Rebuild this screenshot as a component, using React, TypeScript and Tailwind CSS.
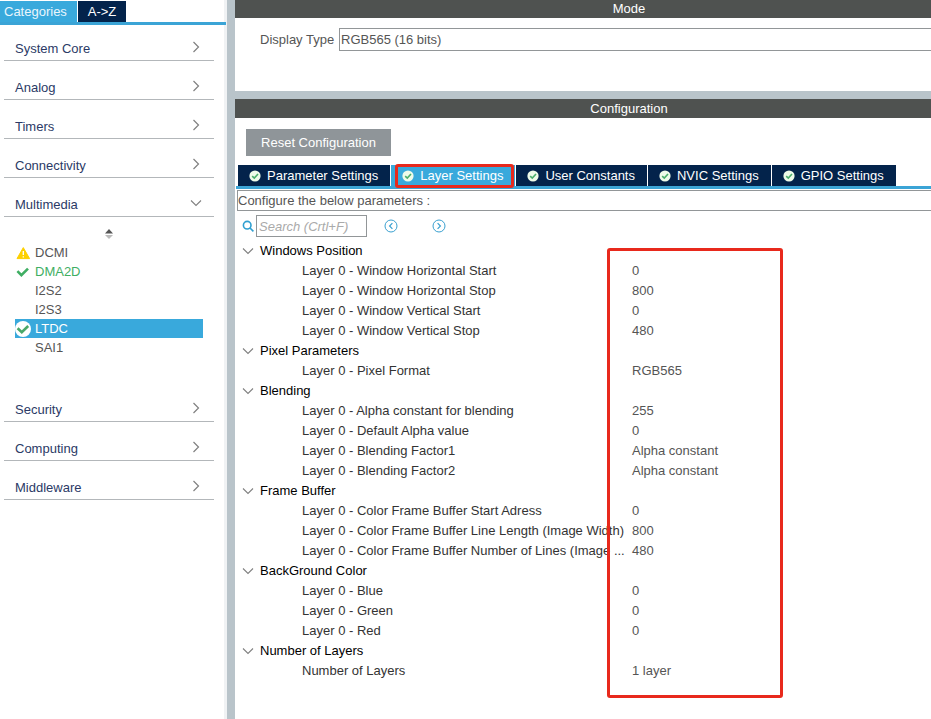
import React, { useState } from "react";
import clsx from "clsx";

type Status = "warning" | "ok" | "selected" | "none";

interface Peripheral {
  name: string;
  status: Status;
}

interface Param {
  label: string;
  value: string;
}

interface Group {
  title: string;
  params: Param[];
}

const peripherals: Peripheral[] = [
  { name: "DCMI", status: "warning" },
  { name: "DMA2D", status: "ok" },
  { name: "I2S2", status: "none" },
  { name: "I2S3", status: "none" },
  { name: "LTDC", status: "selected" },
  { name: "SAI1", status: "none" },
];

const statusText: Record<Status, string> = {
  warning: "text-[#555]",
  ok: "text-[#3fae63]",
  selected: "bg-[#39a9dc] text-white",
  none: "text-[#555]",
};

const tabs = [
  "Parameter Settings",
  "Layer Settings",
  "User Constants",
  "NVIC Settings",
  "GPIO Settings",
];

const groups: Group[] = [
  {
    title: "Windows Position",
    params: [
      { label: "Layer 0 - Window Horizontal Start", value: "0" },
      { label: "Layer 0 - Window Horizontal Stop", value: "800" },
      { label: "Layer 0 - Window Vertical Start", value: "0" },
      { label: "Layer 0 - Window Vertical Stop", value: "480" },
    ],
  },
  {
    title: "Pixel Parameters",
    params: [{ label: "Layer 0 - Pixel Format", value: "RGB565" }],
  },
  {
    title: "Blending",
    params: [
      { label: "Layer 0 - Alpha constant for blending", value: "255" },
      { label: "Layer 0 - Default Alpha value", value: "0" },
      { label: "Layer 0 - Blending Factor1", value: "Alpha constant" },
      { label: "Layer 0 - Blending Factor2", value: "Alpha constant" },
    ],
  },
  {
    title: "Frame Buffer",
    params: [
      { label: "Layer 0 - Color Frame Buffer Start Adress", value: "0" },
      { label: "Layer 0 - Color Frame Buffer Line Length (Image Width)", value: "800" },
      { label: "Layer 0 - Color Frame Buffer Number of Lines (Image ...", value: "480" },
    ],
  },
  {
    title: "BackGround Color",
    params: [
      { label: "Layer 0 - Blue", value: "0" },
      { label: "Layer 0 - Green", value: "0" },
      { label: "Layer 0 - Red", value: "0" },
    ],
  },
  {
    title: "Number of Layers",
    params: [{ label: "Number of Layers", value: "1 layer" }],
  },
];

const ChevronRight = () => (
  <svg className="h-3 w-3" viewBox="0 0 12 12" fill="none" stroke="#808080" strokeWidth="1.2">
    <path d="M3.5 1 8.5 6l-5 5" />
  </svg>
);

const ChevronDown = () => (
  <svg className="h-3 w-3 shrink-0" viewBox="0 0 12 12" fill="none" stroke="#808080" strokeWidth="1.1">
    <path d="M1 3.5 6 8.5l5-5" />
  </svg>
);

const TabCheck = () => (
  <svg className="h-3 w-3 shrink-0" viewBox="0 0 12 12">
    <circle cx="6" cy="6" r="5.6" fill="#eefbe9" />
    <path d="M3.2 6.1 5.3 8.1 9 4" fill="none" stroke="#4caf6c" strokeWidth="1.6" />
  </svg>
);

function StatusIcon({ status }: { status: Status }) {
  if (status === "warning") {
    return (
      <svg className="h-4 w-4" viewBox="0 0 16 16">
        <path d="M8.3 2.6 14.6 13.6H2Z" fill="#fdd000" stroke="#fdd000" strokeLinejoin="round" />
        <path d="M8.3 6v4M8.3 11.2v1.4" stroke="#fff" strokeWidth="1.3" />
      </svg>
    );
  }
  if (status === "ok") {
    return (
      <svg className="h-4 w-4" viewBox="0 0 16 16" fill="none" stroke="#3fae63" strokeWidth="2.6">
        <path d="M2.4 7.2 6.4 11.2 13 4.6" />
      </svg>
    );
  }
  if (status === "selected") {
    return (
      <svg className="h-4 w-4" viewBox="0 0 16 16" fill="none">
        <circle cx="8" cy="8" r="8" fill="#fff" />
        <path d="M2.6 7.2 6.8 11.2 13.2 5" stroke="#4aa869" strokeWidth="2.6" />
      </svg>
    );
  }
  return null;
}

function Category({ name, open }: { name: string; open?: boolean }) {
  return (
    <button
      className="flex h-9 w-full items-center justify-between border-b border-[#b3b7ba] pt-3 pr-3 pl-[11px] text-left text-[#2b3a66]"
      aria-expanded={!!open}
    >
      <span>{name}</span>
      <span className="pb-1">{open ? <ChevronDown /> : <ChevronRight />}</span>
    </button>
  );
}

function Sidebar() {
  return (
    <aside className="w-[227px] shrink-0 border-r-[3px] border-[#f0f2f4]">
      <div className="-mr-0.5 flex h-[25px] border-b-[3px] border-[#3ba4d6] pt-px">
        <button className="w-[77px] bg-[#39a9dc] pl-1 text-left text-[#eaf6fc]">Categories</button>
        <button className="ml-px w-12 bg-[#03234b] text-white">A-&gt;Z</button>
      </div>

      <nav className="mr-2.5 ml-1 flex flex-col gap-[3px]">
        <Category name="System Core" />
        <Category name="Analog" />
        <Category name="Timers" />
        <Category name="Connectivity" />
        <Category name="Multimedia" open />

        <div className="h-[163px] px-[11px] pt-[9px]">
          <svg className="mx-auto mb-1 h-2.5 w-2.5" viewBox="0 0 10 10">
            <path d="M5 0 9 4.4H1Z" fill="#555" />
            <path d="M1 6h8L5 10Z" fill="#bbb" />
          </svg>
          <ul>
            {peripherals.map((p) => (
              <li key={p.name}>
                <button
                  className={clsx(
                    "flex h-[19px] w-full items-center gap-1 text-left",
                    statusText[p.status]
                  )}
                >
                  <span className="w-4">
                    <StatusIcon status={p.status} />
                  </span>
                  {p.name}
                </button>
              </li>
            ))}
          </ul>
        </div>

        <Category name="Security" />
        <Category name="Computing" />
        <Category name="Middleware" />
      </nav>
    </aside>
  );
}

function PanelTitle({ children }: { children: React.ReactNode }) {
  return (
    <h2 className="h-[19px] bg-[#4f5250] pl-[92px] text-center leading-[19px] text-white">
      {children}
    </h2>
  );
}

function ParamTable() {
  return (
    <div className="relative">
      <table className="w-full table-fixed border-collapse text-left">
        <colgroup>
          <col className="w-[395px]" />
          <col />
        </colgroup>
        {groups.map((group) => (
          <tbody key={group.title}>
            <tr className="h-5">
              <th colSpan={2} className="p-0 pl-[5px] font-normal text-black">
                <span className="flex items-center gap-1.5">
                  <ChevronDown />
                  {group.title}
                </span>
              </th>
            </tr>
            {group.params.map((param) => (
              <tr key={param.label} className="h-5">
                <td className="p-0 pl-[65px] whitespace-nowrap text-[#333]">{param.label}</td>
                <td className="p-0 text-[#555]">{param.value}</td>
              </tr>
            ))}
          </tbody>
        ))}
      </table>
      {/* highlight around the values column */}
      <div className="pointer-events-none absolute top-[7px] -bottom-[17px] left-[370px] w-44 rounded-[3px] border-3 border-[#e8291c]" />
    </div>
  );
}

export default function App() {
  const [active, setActive] = useState("Layer Settings");

  return (
    <div className="flex min-h-screen overflow-hidden bg-white font-['Liberation_Sans',Arial,sans-serif] text-[13px] leading-5">
      <Sidebar />
      <div className="w-2 shrink-0 bg-[#b9c4ca]" />

      <main className="min-w-0 flex-1">
        <section className="-mt-px">
          <PanelTitle>Mode</PanelTitle>
          <div className="flex h-[73px] items-start pt-2.5 pl-[25px]">
            <label htmlFor="display-type" className="w-[79px] shrink-0 leading-[23px] text-[#555]">
              Display Type
            </label>
            <select
              id="display-type"
              className="h-[23px] min-w-0 flex-1 appearance-none border border-r-0 border-[#929698] bg-white pl-px text-[#555]"
            >
              <option>RGB565 (16 bits)</option>
            </select>
          </div>
        </section>

        <div className="h-2 bg-[#b9c4ca]" />

        <section>
          <PanelTitle>Configuration</PanelTitle>
          <button className="mt-[11px] ml-[11px] h-[27px] w-[145px] bg-[#8f9599] text-white">
            Reset Configuration
          </button>

          <div className="mt-[9px] ml-px flex h-6 gap-px border-b-[3px] border-[#3ba4d6] pl-0.5">
            {tabs.map((tab) => (
              <button
                key={tab}
                onClick={() => setActive(tab)}
                className={clsx(
                  "relative flex items-center gap-1.5 pr-3 pl-[11px] whitespace-nowrap text-white",
                  tab === active ? "bg-[#39a9dc]" : "bg-[#03234b]"
                )}
              >
                <TabCheck />
                {tab}
                {tab === active && (
                  <span className="absolute -top-px right-px -bottom-0.5 left-1 rounded-[3px] border-3 border-[#e8291c]" />
                )}
              </button>
            ))}
          </div>

          <div className="pl-0.5">
            <p className="mt-px h-[21px] border border-r-0 border-[#929698] leading-[19px] text-[#555]">
              Configure the below parameters :
            </p>

            <div className="flex h-[30px] items-center pl-[5px]">
              <svg className="h-3 w-3" viewBox="0 0 12 12" fill="none" stroke="#2f9fd0" strokeWidth="1.6">
                <circle cx="5.2" cy="5.2" r="3.8" />
                <path d="m8 8 3.4 3.4" />
              </svg>
              <input
                aria-label="Search"
                placeholder="Search (Crtl+F)"
                className="ml-0.5 h-[22px] w-[111px] border border-[#929698] pl-0.5 italic placeholder:text-[#aaa]"
              />
              <button aria-label="Previous" className="ml-[17px]">
                <svg className="h-3.5 w-3.5" viewBox="0 0 14 14" fill="none" stroke="#39a0d0">
                  <circle cx="7" cy="7" r="6" />
                  <path d="M8.4 4.2 5.6 7l2.8 2.8" strokeWidth="1.2" />
                </svg>
              </button>
              <button aria-label="Next" className="ml-[34px]">
                <svg className="h-3.5 w-3.5" viewBox="0 0 14 14" fill="none" stroke="#39a0d0">
                  <circle cx="7" cy="7" r="6" />
                  <path d="M5.6 4.2 8.4 7 5.6 9.8" strokeWidth="1.2" />
                </svg>
              </button>
            </div>

            <ParamTable />
          </div>
        </section>
      </main>
    </div>
  );
}
